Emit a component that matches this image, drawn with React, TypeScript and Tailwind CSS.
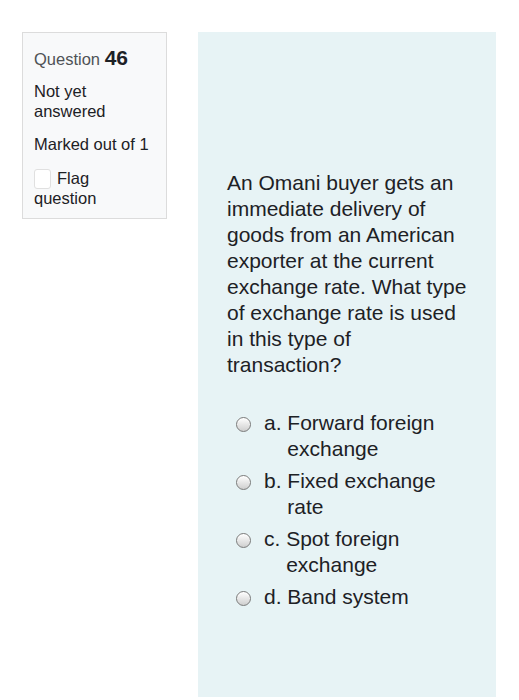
import React from "react";

const options = [
  { n: "a.", t: "Forward foreign exchange" },
  { n: "b.", t: "Fixed exchange rate" },
  { n: "c.", t: "Spot foreign exchange" },
  { n: "d.", t: "Band system" },
];

function Radio() {
  return (
    <span className="mt-[7px] h-[15px] w-[15px] shrink-0 rounded-full border border-[#7a7a7a] bg-gradient-to-b from-[#ffffff] to-[#cfcfcf] shadow-[inset_0_1px_1px_rgba(255,255,255,0.8)]" />
  );
}

export default function App() {
  return (
    <div
      className="flex min-h-[700px] w-[519px] items-start bg-white pl-[22px] pt-[32px] text-[#1d2125]"
      style={{ fontFamily: '"Liberation Sans", Arial, sans-serif' }}
    >
      <div className="w-[145px] shrink-0 border border-[#dcdcdc] bg-[#f8f9fa] px-[11px] pb-[10px] pt-[13px]">
        <div className="h-[24px] leading-[24px]">
          <span className="text-[16.5px] text-[#4f5256]">Question </span>
          <span className="text-[21px] font-bold text-[#1d2125]">46</span>
        </div>
        <div className="mt-[11px] text-[16.5px] leading-[20px]">Not yet answered</div>
        <div className="mt-[13px] text-[16.5px] leading-[20px]">Marked out of 1</div>
        <div className="mt-[15px] text-[16.5px] leading-[19px]">
          <span className="mr-[6px] inline-block h-[20px] w-[17px] rounded-[3px] border border-[#e0e0e0] bg-white align-[-5px]" />
          Flag
          <br />
          question
        </div>
      </div>
      <div className="ml-[31px] h-[665px] w-[298px] shrink-0 bg-[#e7f3f5] pl-[29px] pt-[138px]">
        <div className="w-[241px] text-[21px] leading-[26px]">
          An Omani buyer gets an immediate delivery of goods from an American exporter at the current exchange rate. What type of exchange rate is used in this type of transaction?
        </div>
        <div className="mt-[32px] flex w-[244px] flex-col gap-[6px] pl-[9px] text-[21px] leading-[26px]">
          {options.map((o) => (
            <div key={o.n} className="flex items-start">
              <Radio />
              <span className="ml-[13px] shrink-0 whitespace-pre">{o.n} </span>
              <span>{o.t}</span>
            </div>
          ))}
        </div>
      </div>
    </div>
  );
}
